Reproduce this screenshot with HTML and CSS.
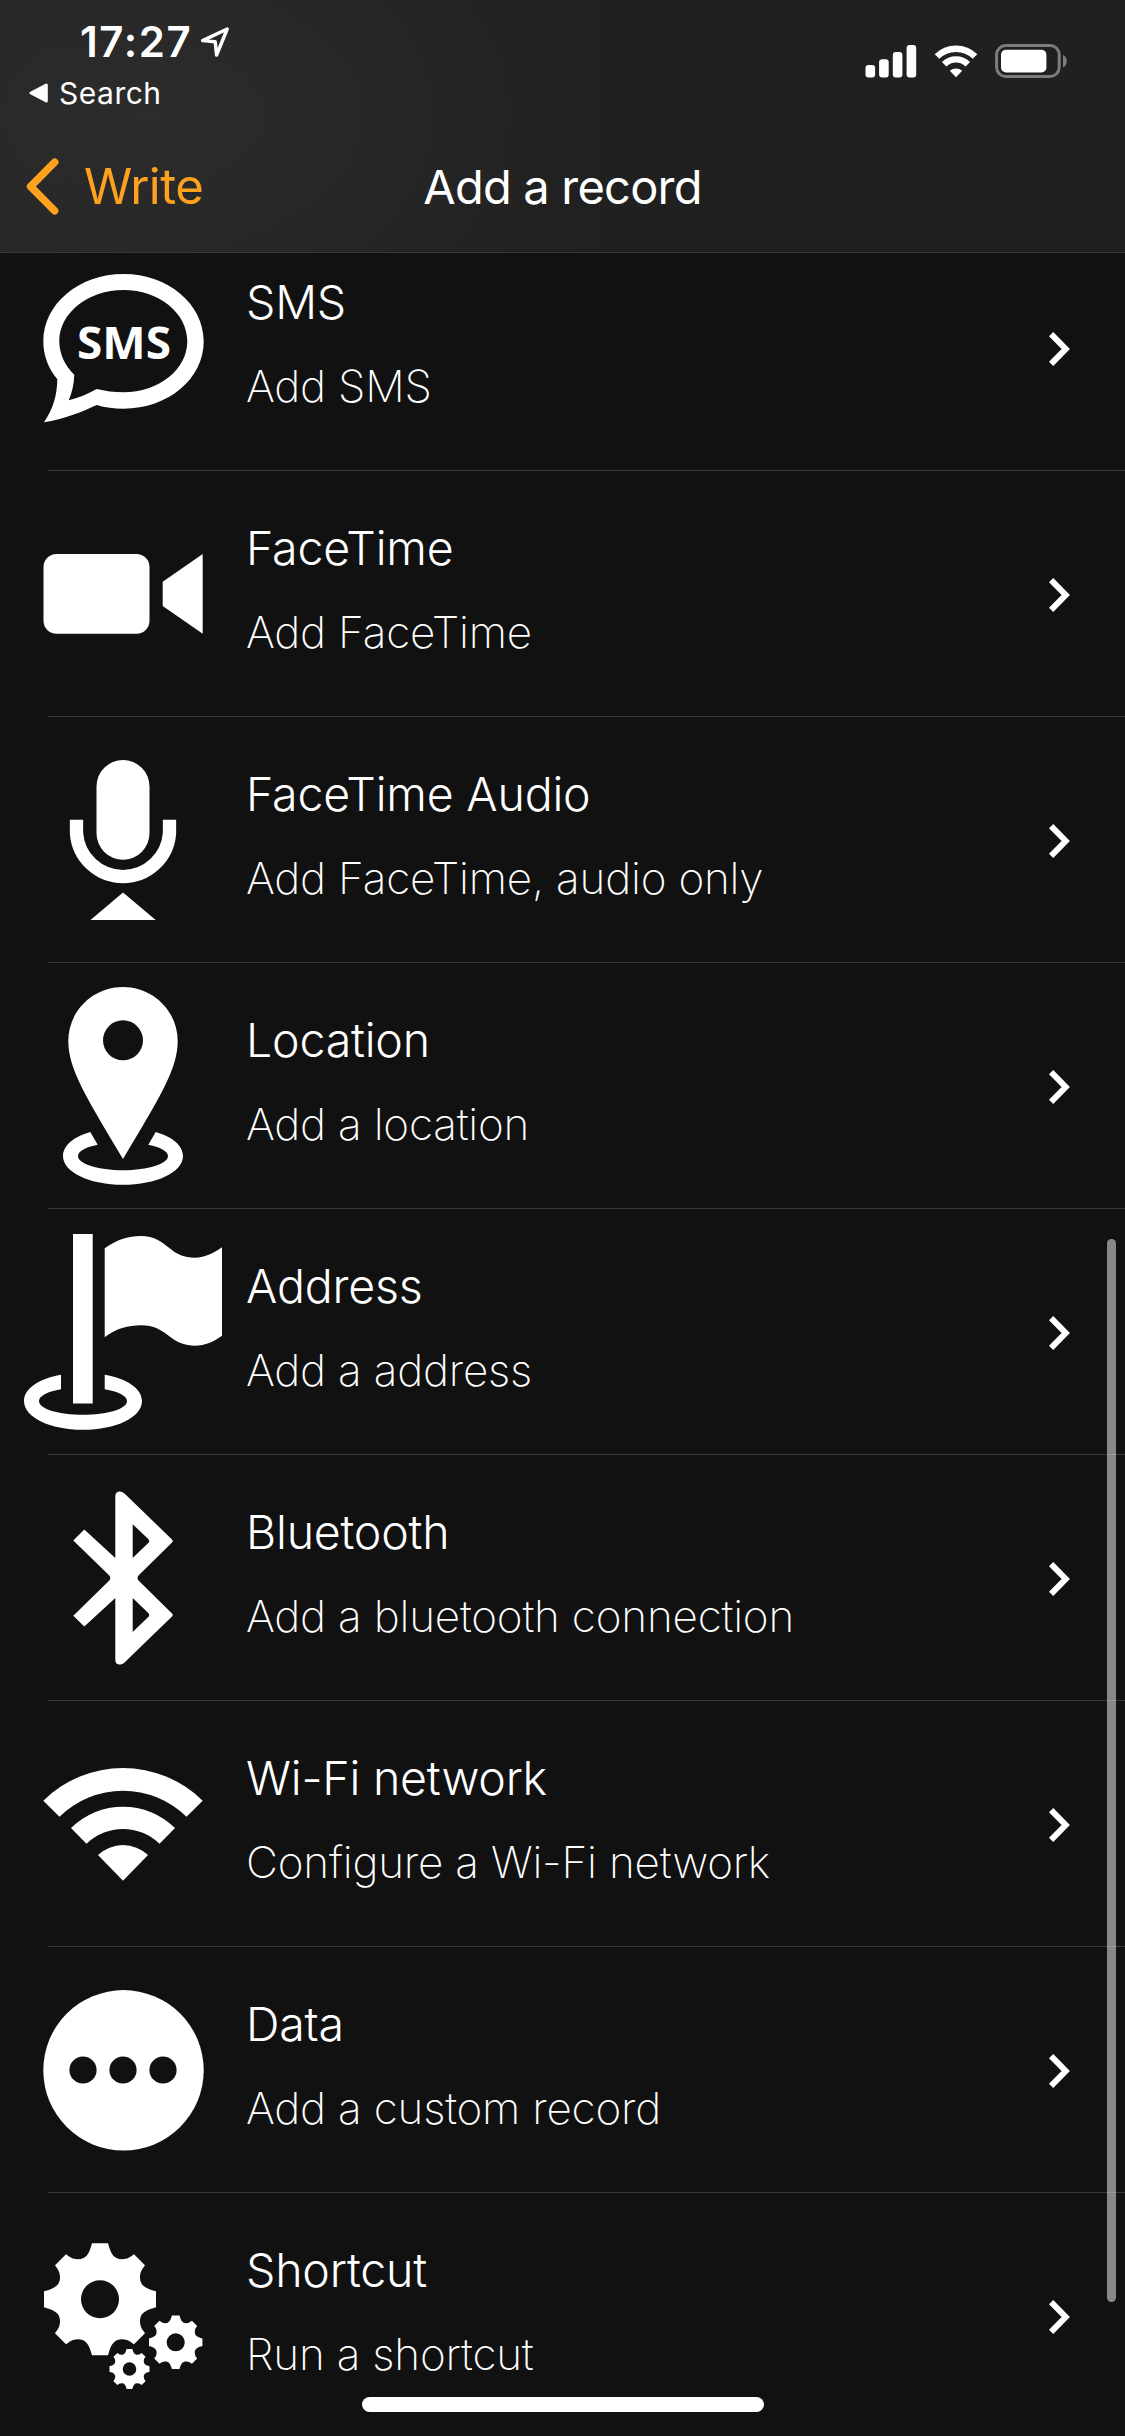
FILE: index.html
```html
<!DOCTYPE html>
<html lang="en">
<head>
  <meta charset="UTF-8" />
  <meta name="viewport" content="width=device-width, initial-scale=1.0"/>
  <title>Add a record</title>
  <link rel="stylesheet" href="styles.css">
</head>
<body>
  <header class="header">
    <div class="status-bar">
      <div class="status-left">
        <div class="clock">
          <span class="time">17:27</span>
          <svg width="30" height="32" viewBox="0 0 30 32" fill="none" stroke="#fff" stroke-width="3.4" stroke-linejoin="round"><path d="M27.2 3L2.6 14.6L15.2 15.8L16.6 29Z"/></svg>
        </div>
        <div class="back-app">
          <svg width="19" height="20" viewBox="0 0 19 20" fill="#fff" stroke="#fff" stroke-width="3" stroke-linejoin="round"><path d="M17.3 2L2 10L17.3 18Z"/></svg>
          <span>Search</span>
        </div>
      </div>
      <div class="status-right">
        <svg width="52" height="34" viewBox="0 0 52 34" fill="#fff">
          <rect x="0.5" y="21" width="9.6" height="12.5" rx="3"/>
          <rect x="14.1" y="15.3" width="9.6" height="18.2" rx="3"/>
          <rect x="27.8" y="8" width="9.6" height="25.5" rx="3"/>
          <rect x="41.6" y="1" width="9.6" height="32.5" rx="3"/>
        </svg>
        <svg width="44" height="34" viewBox="0 0 44 34" fill="none">
          <path d="M3 12.5A27 27 0 0 1 41 12.5" stroke="#fff" stroke-width="6.6"/>
          <path d="M10.2 20.2A16.8 16.8 0 0 1 33.8 20.2" stroke="#fff" stroke-width="6.4"/>
          <path d="M15.8 26.8A9.2 9.2 0 0 1 28.2 26.8L22 33.2Z" fill="#fff"/>
        </svg>
        <svg width="73" height="34" viewBox="0 0 73 34">
          <rect x="1.6" y="1.6" width="62.6" height="30.8" rx="9" fill="none" stroke="#7c7c7c" stroke-width="3"/>
          <rect x="6" y="5.8" width="45.4" height="22.6" rx="5" fill="#fff"/>
          <path d="M68 11C73 13 73 21.5 68 23.5Z" fill="#7c7c7c"/>
        </svg>
      </div>
    </div>
    <nav class="nav">
      <a href="#" class="back">
        <svg width="34" height="57" viewBox="0 0 34 57" fill="none" stroke="#fda11f" stroke-width="7.5" stroke-linecap="round" stroke-linejoin="round"><path d="M28.7 4.2L4.6 28.5L28.7 52.8"/></svg>
        <span>Write</span>
      </a>
      <h1>Add a record</h1>
    </nav>
  </header>

  <!-- Record types, scrolled a little under the header -->
  <main class="content">
    <ul class="records">
      <li class="record">
        <svg class="icon" viewBox="0 0 198 198">
          <path fill-rule="evenodd" d="M99.5 25C144 25 179.7 55 179.7 92.3C179.7 130 144 159.7 99.5 159.7C90 159.7 81 158.5 72.7 156C58 163 40 170 20 173.3C29 160 33 147 33.3 130.3C24 119 19.3 106 19.3 92.3C19.3 55 55 25 99.5 25ZM99.5 41C64 41 35.3 64 35.3 92.3C35.3 105 41 117 50.3 125.7C50 135 48 144 44.7 151.3C54 149 64 145 72.7 140C81 142 90 143.3 99.5 143.3C135 143.3 163.3 120.5 163.3 92.3C163.3 64 135 41 99.5 41Z"/>
          <text x="53" y="110" class="icon-text" textLength="94" lengthAdjust="spacingAndGlyphs">SMS</text>
        </svg>
        <div class="info"><h2>SMS</h2><p>Add SMS</p></div>
        <svg class="arrow" viewBox="0 0 21 34"><path d="M2.1 2.1L16.7 17L2.1 31.9"/></svg>
      </li>
      <li class="record">
        <svg class="icon" viewBox="0 0 198 198">
          <rect x="19.5" y="59" width="106" height="79.7" rx="13"/>
          <path d="M138.7 86.7L178.7 59V138.7L138.7 111Z"/>
        </svg>
        <div class="info"><h2>FaceTime</h2><p>Add FaceTime</p></div>
        <svg class="arrow" viewBox="0 0 21 34"><path d="M2.1 2.1L16.7 17L2.1 31.9"/></svg>
      </li>
      <li class="record">
        <svg class="icon" viewBox="0 0 198 198">
          <rect x="72.5" y="19" width="53" height="99.7" rx="26.5"/>
          <path d="M52.5 78.7V92A46.6 46.6 0 0 0 145.5 92V78.7" fill="none" stroke="#fff" stroke-width="13.3"/>
          <path d="M99 151.5L131.7 179H66.5Z"/>
        </svg>
        <div class="info"><h2>FaceTime Audio</h2><p>Add FaceTime, audio only</p></div>
        <svg class="arrow" viewBox="0 0 21 34"><path d="M2.1 2.1L16.7 17L2.1 31.9"/></svg>
      </li>
      <li class="record">
        <svg class="icon" viewBox="0 0 198 198">
          <path fill-rule="evenodd" d="M99 0C69 0 44.3 24 44.3 54C44.3 82 62 110 99 172C136 110 153.7 82 153.7 54C153.7 24 129 0 99 0ZM99 33.3A20 20 0 1 1 99 73.3A20 20 0 1 1 99 33.3Z"/>
          <path d="M66.3 145C50 149.5 39 158.5 39 169C39 185.5 66 197.8 99 197.8S159 185.5 159 169C159 158.5 148 149.5 131.7 145L124.3 157.7C136 160 144 164 144 169C144 177 124 183.2 99 183.2S54 177 54 169C54 164 62 160 73.7 157.7Z"/>
        </svg>
        <div class="info"><h2>Location</h2><p>Add a location</p></div>
        <svg class="arrow" viewBox="0 0 21 34"><path d="M2.1 2.1L16.7 17L2.1 31.9"/></svg>
      </li>
      <li class="record">
        <svg class="icon" viewBox="0 0 198 198">
          <path d="M49 1H68.7V170.5H49Z"/>
          <path d="M80.7 15.3C92 7 104 3 117 3C130 3 137 8.5 145 14.8C153 21.5 160 24.7 171 24.7C181 24.7 190 20 198 14.3V102.7C190 108.5 181 112.7 171 112.7C161 112.7 153 109.5 145 103C137 97 130 92.3 117 92.3C104 92.3 92 95.5 80.7 104.3Z"/>
          <path d="M37 141.7C15 145.5 0 155.5 0 168C0 184.5 26 196.8 59 196.8S118 184.5 118 168C118 155.5 103 145.5 80.7 141.7V156.3C94 158.5 103 163 103 168C103 176 83 181.8 59 181.8S15 176 15 168C15 163 24 158.5 37 156.3Z"/>
        </svg>
        <div class="info"><h2>Address</h2><p>Add a address</p></div>
        <svg class="arrow" viewBox="0 0 21 34"><path d="M2.1 2.1L16.7 17L2.1 31.9"/></svg>
      </li>
      <li class="record">
        <svg class="icon" viewBox="0 0 198 198">
          <path fill-rule="evenodd" d="M91.3 17C91.3 12 96.5 11 100.5 14.5L148 60.5Q149.5 62 148 63.5L114.5 96.5Q112.5 99 114.5 101.5L148 134.5Q149.5 136 148 137.5L100.5 183.5C96.5 187 91.3 186 91.3 181V119L60.3 147.5L49.3 136.7L85.3 101.5Q87.3 99 85.3 96.5L49.3 61.5L60.3 50.5L91.3 79ZM108.7 45.3V79L124.5 63.8Q126 62 124.5 60.2ZM108.7 119V153L124.5 137.8Q126 136 124.5 134.2Z"/>
        </svg>
        <div class="info"><h2>Bluetooth</h2><p>Add a bluetooth connection</p></div>
        <svg class="arrow" viewBox="0 0 21 34"><path d="M2.1 2.1L16.7 17L2.1 31.9"/></svg>
      </li>
      <li class="record">
        <svg class="icon" viewBox="0 0 198 198">
          <path d="M19.3 75.7A113.5 113.5 0 0 1 178.7 75.7L162.5 91.7A90.5 90.5 0 0 0 35.5 91.7Z"/>
          <path d="M47 103A74 74 0 0 1 151 103L135.5 118.7A52.5 52.5 0 0 0 62.5 118.7Z"/>
          <path d="M74 130A36.5 36.5 0 0 1 124 130L99 155.7Z"/>
        </svg>
        <div class="info"><h2>Wi-Fi network</h2><p>Configure a Wi-Fi network</p></div>
        <svg class="arrow" viewBox="0 0 21 34"><path d="M2.1 2.1L16.7 17L2.1 31.9"/></svg>
      </li>
      <li class="record">
        <svg class="icon" viewBox="0 0 198 198">
          <circle cx="99.5" cy="99.3" r="80.2"/>
          <g fill="#111">
            <circle cx="59" cy="99" r="13.6"/>
            <circle cx="99" cy="99" r="13.6"/>
            <circle cx="139" cy="99" r="13.6"/>
          </g>
        </svg>
        <div class="info"><h2>Data</h2><p>Add a custom record</p></div>
        <svg class="arrow" viewBox="0 0 21 34"><path d="M2.1 2.1L16.7 17L2.1 31.9"/></svg>
      </li>
      <li class="record">
        <svg class="icon" viewBox="0 0 198 198">
          <defs>
            <path id="gear" fill-rule="evenodd" d="M-8-56H8C11-45 14-40 22-40C28-40 31-43 34-45L45-34C43-31 40-28 40-22C40-14 45-11 56-8V8C45 11 40 14 40 22C40 28 43 31 45 34L34 45C31 43 28 40 22 40C14 40 11 45 8 56H-8C-11 45-14 40-22 40C-28 40-31 43-34 45L-45 34C-43 31-40 28-40 22C-40 14-45 11-56 8V-8C-45-11-40-14-40-22C-40-28-43-31-45-34L-34-45C-31-43-28-40-22-40C-14-40-11-45-8-56ZM0-19A19 19 0 1 0 0 19A19 19 0 1 0 0-19Z"/>
          </defs>
          <use href="#gear" transform="translate(76 82.3)"/>
          <use href="#gear" transform="translate(151.7 125.3) scale(.477)"/>
          <use href="#gear" transform="translate(105.5 152) scale(.357)"/>
        </svg>
        <div class="info"><h2>Shortcut</h2><p>Run a shortcut</p></div>
        <svg class="arrow" viewBox="0 0 21 34"><path d="M2.1 2.1L16.7 17L2.1 31.9"/></svg>
      </li>
    </ul>
  </main>

  <div class="scrollbar"></div>
  <div class="home-indicator"></div>
</body>
</html>
```
FILE: styles.css
```css
* { margin: 0; padding: 0; box-sizing: border-box; }
body {
  position: relative;
  display: flex;
  flex-direction: column;
  width: 1125px;
  height: 2436px;
  overflow: hidden;
  background-color: #111;
  color: #fff;
  font-family: Inter, "Liberation Sans", sans-serif;
}
svg {
  display: block;
  flex: none;
}
.header {
  flex: none;
  height: 253px;
  border-bottom: 1px solid #393a3a;
  background: radial-gradient(ellipse 420px 260px at 150px 115px, #2c2c2c, rgba(36,36,36,0)), linear-gradient(90deg, #252525, #202020 60%);
}
/* Status bar */
.status-bar {
  display: flex;
  justify-content: space-between;
  height: 118px;
}
.status-left {
  padding-top: 16px;
}
.clock {
  display: flex;
  align-items: center;
  gap: 8px;
  height: 52px;
  padding-left: 80px;
}
.time {
  width: 112px;
  font-size: 42px;
  font-weight: 600;
  line-height: 52px;
  letter-spacing: 1.6px;
}
.back-app {
  display: flex;
  align-items: center;
  gap: 11px;
  height: 50px;
  padding-left: 29px;
  font-size: 30px;
  font-weight: 400;
  line-height: 50px;
  letter-spacing: 0.5px;
}
.status-right {
  display: flex;
  gap: 17px;
  padding: 44px 57px 0 0;
}
/* Navigation */
.nav {
  display: grid;
  grid-template-columns: 1fr auto 1fr;
  align-items: center;
  height: 136px;
}
.back {
  display: flex;
  align-items: center;
  gap: 24px;
  padding-left: 26px;
  color: #fda11f;
  font-size: 49px;
  letter-spacing: -0.5px;
  text-decoration: none;
}
.nav h1 {
  font-size: 47px;
  font-weight: 400;
  letter-spacing: -0.8px;
}
/* Records list */
.content {
  flex: 1;
  overflow: hidden;
}
.records {
  margin-top: -28px;
  list-style: none;
}
.record {
  display: flex;
  align-items: center;
  height: 246px;
  padding: 0 55px 0 24px;
  background: linear-gradient(#393939, #393939) 48px 100% / 100% 1px no-repeat;
}
.icon {
  width: 198px;
  height: 198px;
  fill: #fff;
}
.icon-text {
  font-family: "Open Sans", sans-serif;
  font-size: 45px;
  font-weight: 700;
}
.info {
  flex: 1;
  height: 246px;
  padding: 47px 0 0 24px;
}
.info h2 {
  margin-bottom: 24px;
  font-size: 46.5px;
  font-weight: 300;
  line-height: 60px;
  letter-spacing: -0.2px;
}
.info p {
  font-size: 44px;
  font-weight: 200;
  line-height: 60px;
  letter-spacing: -0.2px;
}
.arrow {
  width: 21px;
  height: 34px;
  margin-top: 2px;
  fill: none;
  stroke: #fff;
  stroke-width: 6;
}
/* Overlays */
.scrollbar {
  position: absolute;
  top: 1239px;
  right: 9px;
  width: 9px;
  height: 1063px;
  border-radius: 5px;
  background-color: rgba(255,255,255,0.5);
}
.home-indicator {
  position: absolute;
  bottom: 24px;
  left: 362px;
  width: 402px;
  height: 15px;
  border-radius: 8px;
  background-color: #fff;
}
```
